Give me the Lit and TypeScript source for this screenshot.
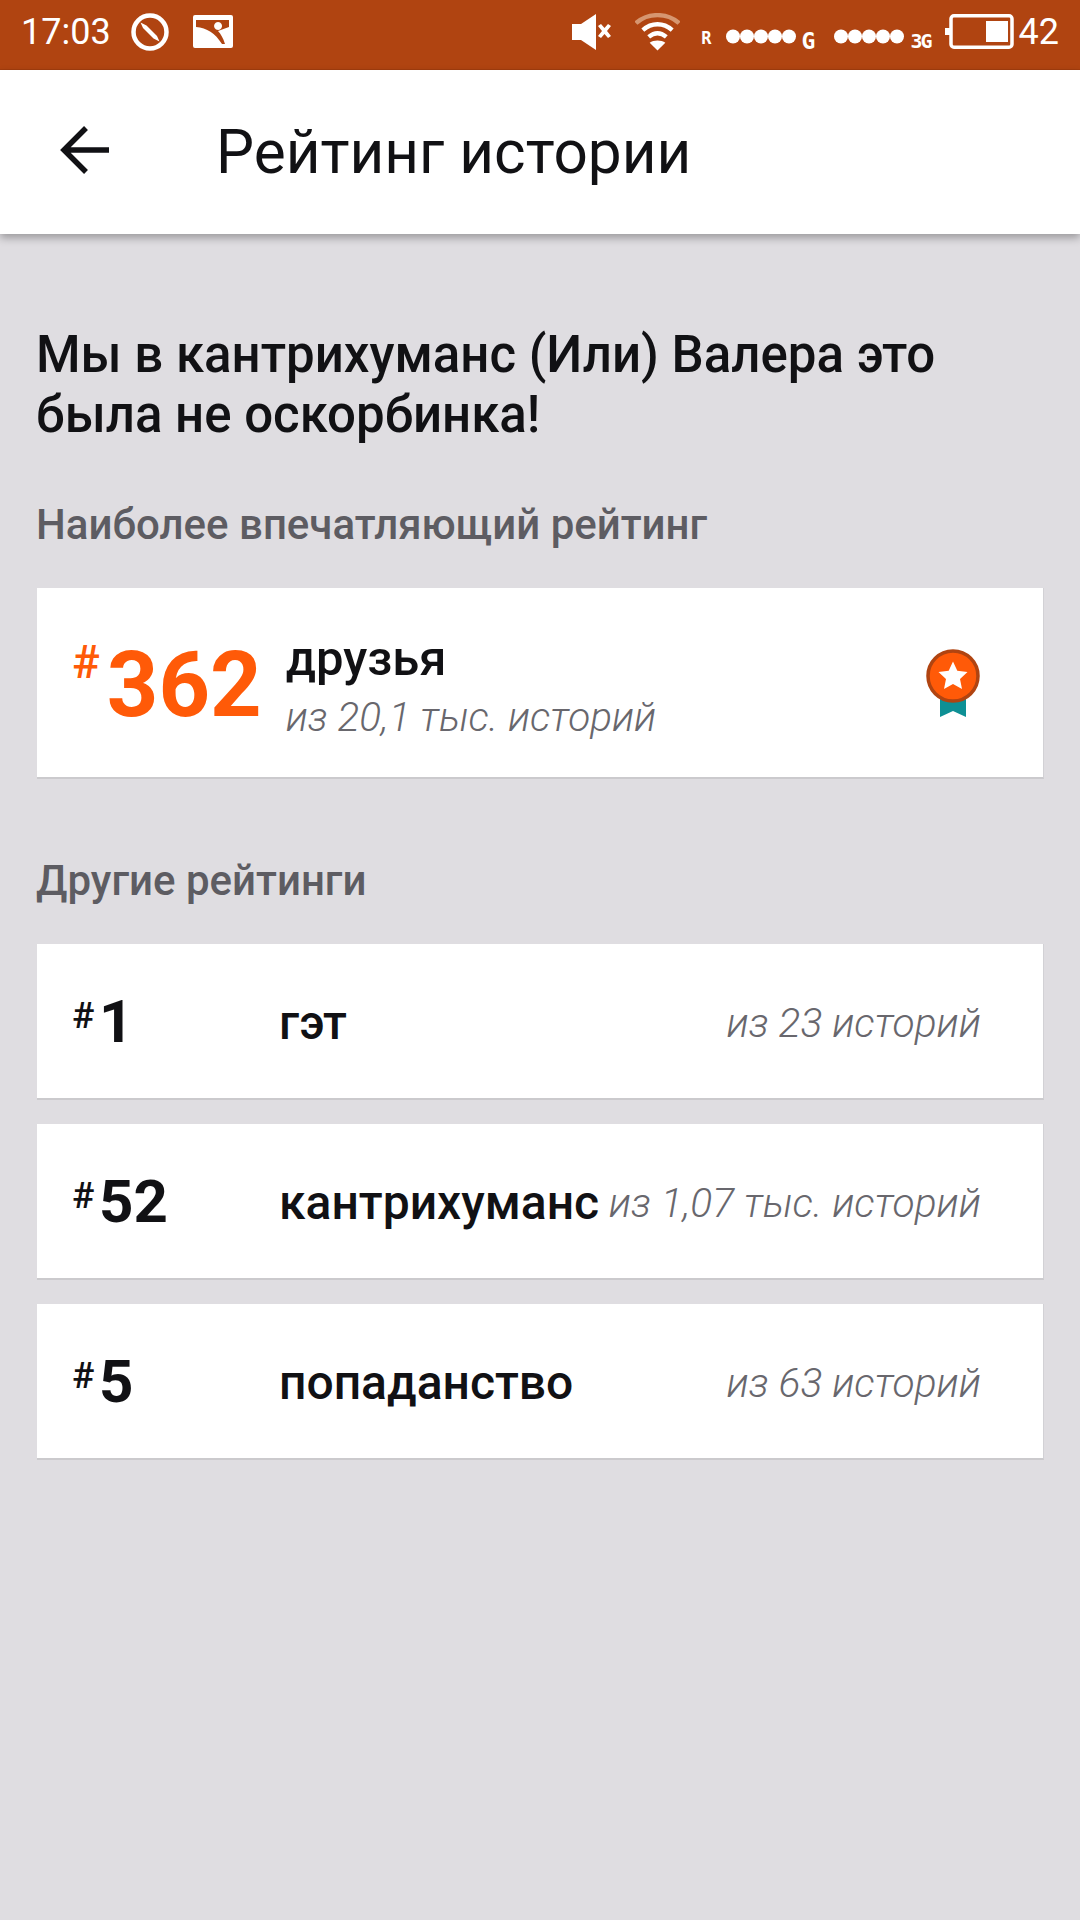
import { LitElement, html, css, svg } from "lit";
import { customElement } from "lit/decorators.js";

const otherRatings = [
  { rank: "1", tag: "гэт", total: "из 23 историй" },
  { rank: "52", tag: "кантрихуманс", total: "из 1,07 тыс. историй" },
  { rank: "5", tag: "попаданство", total: "из 63 историй" },
];

const dots = svg`<circle cx="7" cy="7.500" r="7"/><circle cx="21" cy="7.500" r="7"/><circle cx="35" cy="7.500" r="7"/><circle cx="49" cy="7.500" r="7"/><circle cx="63" cy="7.500" r="7"/>`;

@customElement("app-root")
export class AppRoot extends LitElement {
  static styles = css`
    :host {
      display: block;
      width: 1080px;
      height: 1920px;
      background: #dfdde1;
      font-family: Roboto, "Noto Sans", sans-serif;
      color: #111114;
      overflow: hidden;
    }
    .status {
      height: 70px;
      padding: 0 21px 6px 21px;
      box-sizing: border-box;
      background: #b04411;
      border-bottom: 1px solid #a33d0e;
      display: flex;
      align-items: center;
      color: #fff;
      font-size: 36px;
    }
    .status svg { display: block; flex: none; fill: #fff; }
    .time { width: 110px; }
    .no { margin-right: 24px; }
    .spacer { flex: 1; }
    .speaker { margin-right: 23px; }
    .wifi { margin-right: 21px; }
    .sim {
      font-family: "DejaVu Sans Mono", monospace;
      font-weight: 700;
      line-height: 20px;
    }
    .sim-r { font-size: 17px; margin-top: 12px; margin-right: 14px; }
    .sim-g { font-size: 23px; margin: 18px 19px 0 6px; }
    .sim-3g { font-size: 20px; letter-spacing: -2px; margin: 18px 14px 0 6px; }
    .dots { margin-top: 9px; }
    .level { margin-left: 5px; }
    .toolbar {
      height: 164px;
      background: #fff;
      display: flex;
      align-items: center;
      box-shadow: 0 4px 8px rgba(0, 0, 0, 0.3);
      position: relative;
    }
    .back { flex: none; margin: 0 107px 4px 60px; }
    .title { font-size: 60.3px; line-height: 64px; margin-top: 2px; }
    main { padding: 91px 37px 0 36px; }
    h1 {
      margin: 0;
      font-size: 51px;
      line-height: 60px;
      font-weight: 500;
    }
    h2 {
      margin: 0;
      color: #5d5c62;
      font-size: 42px;
      line-height: 48px;
      font-weight: 500;
    }
    .first-label { margin-top: 56px; }
    .second-label { margin-top: 78px; }
    .card {
      background: #fff;
      border-bottom: 2px solid #cbcacd;
      border-right: 1px solid #d2d1d5;
      display: flex;
      align-items: center;
      box-sizing: border-box;
      margin-left: 1px;
      margin-right: -1px;
    }
    .best { height: 191px; margin-top: 39px; padding: 0 63px 0 35px; }
    .best .hash {
      font-size: 46px;
      font-weight: 500;
      color: #ff5a08;
      align-self: flex-start;
      margin-top: 52px;
      line-height: 44px;
    }
    .best .rank {
      font-size: 90px;
      font-weight: 700;
      color: #ff5a08;
      margin: 6px 0 0 7px;
      width: 179px;
      line-height: 100px;
    }
    .best .info { flex: 1; margin-top: 12px; }
    .best .tag { font-size: 49px; font-weight: 500; line-height: 56px; }
    .best .total { font-size: 40.5px; line-height: 60px; }
    .total {
      color: #68676d;
      font-style: italic;
      font-weight: 300;
    }
    .list { display: flex; flex-direction: column; gap: 24px; margin-top: 39px; }
    .row { height: 156px; padding: 0 62px 0 35px; }
    .row .hash {
      font-size: 37px;
      font-weight: 500;
      line-height: 40px;
      align-self: flex-start;
      margin-top: 52px;
      width: 27px;
    }
    .row .rank { font-size: 60px; font-weight: 700; width: 180px; line-height: 70px; margin-top: 2px; }
    .row .tag { flex: 1; font-size: 48px; font-weight: 500; line-height: 56px; margin-top: 4px; }
    .row .total { font-size: 40.7px; line-height: 52px; white-space: nowrap; margin-top: 3px; }
  `;

  render() {
    return html`
      <div class="status">
        <span class="time">17:03</span>
        <svg class="no" width="38" height="38" viewBox="0 0 38 38">
          <circle cx="19" cy="19" r="16.500" fill="none" stroke="#fff" stroke-width="4.500"/>
          <path d="M9.500 9.500l6 3 10.500 10.500 2.500 5.500-6-3-10.500-10.500z"/>
        </svg>
        <svg width="40" height="33" viewBox="0 0 40 33">
          <path fill-rule="evenodd" d="M2 0h36a2 2 0 0 1 2 2v29a2 2 0 0 1-2 2H2a2 2 0 0 1-2-2V2a2 2 0 0 1 2-2zM3 5v7c11 1 19 6 26 17l3 0c-2-6-4-10-7-13l11-4V5zM25 7a4 4 0 1 0 .1 0z"/>
        </svg>
        <span class="spacer"></span>
        <svg class="speaker" width="40" height="36" viewBox="0 0 40 36">
          <path d="M0 10h9L24 0v36L9 26H0z"/>
          <path d="M26 12l3-2 3.500 4 3.500-4 3 2-4 5 4 5-3 2-3.500-4-3.500 4-3-2 4-5z"/>
        </svg>
        <svg class="wifi" width="45" height="38" viewBox="0 0 46 38">
          <path d="M1 10C13-1 33-1 45 10" fill="none" stroke="#d69670" stroke-width="4.500"/>
          <path d="M8 17c9-8 21-8 30 0M14 24c6-5 12-5 18 0" fill="none" stroke="#fff" stroke-width="4.500"/>
          <path d="M23 38l-8-8c4-3 12-3 16 0z"/>
        </svg>
        <span class="sim sim-r">R</span>
        <svg class="dots" width="70" height="15" viewBox="0 0 70 15">${dots}</svg>
        <span class="sim sim-g">G</span>
        <svg class="dots" width="70" height="15" viewBox="0 0 70 15">${dots}</svg>
        <span class="sim sim-3g">3G</span>
        <svg width="69" height="35" viewBox="0 0 69 35">
          <rect x="6" y="1.750" width="61" height="31.500" rx="3" fill="none" stroke="#fff" stroke-width="3.500"/>
          <rect x="0" y="14" width="6" height="7"/>
          <rect x="41" y="7" width="22" height="21"/>
        </svg>
        <span class="level">42</span>
      </div>

      <header class="toolbar">
        <svg class="back" width="49" height="48" viewBox="0 0 49 48">
          <path d="M49 24H5M26 2L4 24 26 46" fill="none" stroke="#111114" stroke-width="5.500"/>
        </svg>
        <span class="title">Рейтинг истории</span>
      </header>

      <main>
        <h1>Мы в кантрихуманс (Или) Валера это<br />была не оскорбинка!</h1>
        <h2 class="first-label">Наиболее впечатляющий рейтинг</h2>
        <section class="card best">
          <span class="hash">#</span>
          <span class="rank">362</span>
          <div class="info">
            <div class="tag">друзья</div>
            <div class="total">из 20,1 тыс. историй</div>
          </div>
          <svg width="54" height="68" viewBox="0 0 54 68">
            <path d="M14 40h26v28l-13-6-13 6z" fill="#0e9095"/>
            <circle cx="27" cy="27" r="25" fill="#ff5a08" stroke="#b04411" stroke-width="3.500"/>
            <path d="M27 12.500l4.300 9.300 10.200 1.200-7.500 6.900 2 10-9-5-9 5 2-10-7.500-6.900 10.200-1.200z" fill="#fff"/>
          </svg>
        </section>
        <h2 class="second-label">Другие рейтинги</h2>
        <div class="list">
          ${otherRatings.map(
            (r) => html`
              <section class="card row">
                <span class="hash">#</span>
                <span class="rank">${r.rank}</span>
                <span class="tag">${r.tag}</span>
                <span class="total">${r.total}</span>
              </section>
            `,
          )}
        </div>
      </main>
    `;
  }
}
